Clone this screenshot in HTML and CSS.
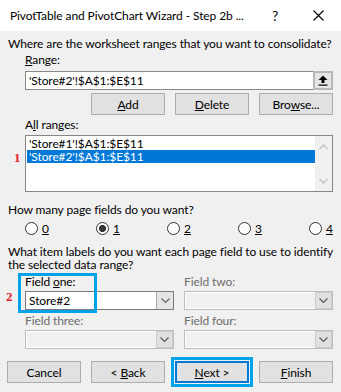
FILE: index.html
```html
<!DOCTYPE html>
<html lang="en">
<head>
  <meta charset="UTF-8" />
  <meta name="viewport" content="width=device-width, initial-scale=1.0"/>
  <title>PivotTable and PivotChart Wizard</title>
  <link rel="stylesheet" href="styles.css">
</head>
<body>
  <div class="dialog">
    <div class="titlebar">
      <span class="title">PivotTable and PivotChart Wizard - Step 2b ...</span>
      <span class="help">?</span>
      <span class="close">
        <svg width="11" height="11" viewBox="0 0 11 11"><path d="M0.5 0.5 L10.5 10.5 M10.5 0.5 L0.5 10.5" stroke="#000" stroke-width="1.1" fill="none"/></svg>
      </span>
    </div>

    <div class="content">
      <p class="text">Where are the worksheet ranges that you want to consolidate?</p>
      <div class="label indent"><u>R</u>ange:</div>
      <div class="range-row indent">
        <div class="textbox">'Store#2'!$A$1:$E$11</div>
        <button class="collapse-btn">
          <svg width="10" height="11" viewBox="0 0 10 11"><path d="M5 0.5 L9.5 5 L6.5 5 L6.5 8 L3.5 8 L3.5 5 L0.5 5 Z" fill="#000"/><rect x="0.5" y="9.5" width="9" height="1.2" fill="#000"/></svg>
        </button>
      </div>

      <div class="btn-row">
        <button class="btn"><u>A</u>dd</button>
        <button class="btn"><u>D</u>elete</button>
        <button class="btn">Bro<u>w</u>se...</button>
      </div>

      <div class="label indent gap-top">A<u>l</u>l ranges:</div>
      <div class="list-wrap indent">
        <span class="marker marker-one">1</span>
        <ul class="list">
          <li>'Store#1'!$A$1:$E$11</li>
          <li class="selected">'Store#2'!$A$1:$E$11</li>
        </ul>
        <div class="scrollbar">
          <svg width="9" height="6" viewBox="0 0 9 6"><path d="M0.5 5 L4.5 1 L8.5 5" stroke="#c2c2c2" stroke-width="1.4" fill="none"/></svg>
          <svg width="9" height="6" viewBox="0 0 9 6"><path d="M0.5 1 L4.5 5 L8.5 1" stroke="#c2c2c2" stroke-width="1.4" fill="none"/></svg>
        </div>
      </div>

      <p class="text question">How many page fields do you want?</p>
      <div class="radios indent">
        <label class="radio"><input type="radio" name="pages"><u>0</u></label>
        <label class="radio"><input type="radio" name="pages" checked><u>1</u></label>
        <label class="radio"><input type="radio" name="pages"><u>2</u></label>
        <label class="radio"><input type="radio" name="pages"><u>3</u></label>
        <label class="radio"><input type="radio" name="pages"><u>4</u></label>
      </div>

      <p class="text wrap">What item labels do you want each page field to use to identify the selected data range?</p>

      <div class="fields indent">
        <div class="field first">
          <span class="marker marker-two">2</span>
          <span class="highlight-box"></span>
          <div class="field-label">Field <u>o</u>ne:</div>
          <div class="combo">
            <div class="combo-text">Store#2</div>
            <div class="combo-btn">
              <svg width="9" height="5" viewBox="0 0 9 5"><path d="M0.5 0.5 L4.5 4.5 L8.5 0.5" stroke="#606060" stroke-width="1.1" fill="none"/></svg>
            </div>
          </div>
        </div>
        <div class="field">
          <div class="field-label disabled">Field two:</div>
          <div class="combo disabled">
            <div class="combo-text"></div>
            <div class="combo-btn">
              <svg width="9" height="5" viewBox="0 0 9 5"><path d="M0.5 0.5 L4.5 4.5 L8.5 0.5" stroke="#555" stroke-width="1.1" fill="none"/></svg>
            </div>
          </div>
        </div>
        <div class="field">
          <div class="field-label disabled">Field three:</div>
          <div class="combo disabled">
            <div class="combo-text"></div>
            <div class="combo-btn">
              <svg width="9" height="5" viewBox="0 0 9 5"><path d="M0.5 0.5 L4.5 4.5 L8.5 0.5" stroke="#555" stroke-width="1.1" fill="none"/></svg>
            </div>
          </div>
        </div>
        <div class="field">
          <div class="field-label disabled">Field four:</div>
          <div class="combo disabled">
            <div class="combo-text"></div>
            <div class="combo-btn">
              <svg width="9" height="5" viewBox="0 0 9 5"><path d="M0.5 0.5 L4.5 4.5 L8.5 0.5" stroke="#555" stroke-width="1.1" fill="none"/></svg>
            </div>
          </div>
        </div>
      </div>

      <div class="footer">
        <button class="btn">Cancel</button>
        <button class="btn">&lt; <u>B</u>ack</button>
        <button class="btn default"><u>N</u>ext &gt;</button>
        <button class="btn"><u>F</u>inish</button>
      </div>
    </div>
  </div>
</body>
</html>
```

FILE: styles.css
```css
* {
  margin: 0;
  padding: 0;
  box-sizing: border-box;
}

body {
  width: 341px;
  height: 392px;
  overflow: hidden;
  background: #f0f0f0;
  color: #000;
  font-family: Lato, 'Noto Sans', sans-serif;
  font-size: 12px;
  letter-spacing: -0.1px;
}

.dialog {
  height: 392px;
  display: flex;
  flex-direction: column;
}

/* Title bar */
.titlebar {
  height: 31px;
  flex-shrink: 0;
  background: #fff;
  display: flex;
  align-items: center;
  padding-left: 10px;
}

.title {
  flex: 1;
  white-space: nowrap;
}

.help {
  width: 40px;
  text-align: center;
  font-size: 14px;
}

.close {
  width: 46px;
  display: flex;
  justify-content: center;
  align-items: center;
}

/* Body */
.content {
  padding: 5px 8px 0;
  display: flex;
  flex-direction: column;
}

.text,
.label {
  line-height: 16px;
  white-space: nowrap;
}

.indent {
  margin-left: 17px;
}

.gap-top {
  margin-top: 2px;
}

.range-row {
  display: flex;
  height: 19px;
  margin-top: 3px;
}

.textbox {
  flex: 1;
  background: #fff;
  border: 1px solid #8a8a8a;
  border-right: none;
  padding-left: 3px;
  line-height: 17px;
}

.collapse-btn {
  width: 20px;
  background: #e6e6e6;
  border: 2px solid #b8b8b8;
  display: flex;
  align-items: center;
  justify-content: center;
}

.btn-row {
  display: flex;
  justify-content: flex-end;
  gap: 10px;
  margin-top: 3px;
}

.btn {
  width: 74px;
  height: 22px;
  background: #e1e1e1;
  border: 1px solid #adadad;
  color: #000;
  font-family: inherit;
  font-size: 12px;
  letter-spacing: inherit;
}

.btn.default {
  border: 2px solid #0078d7;
  outline: 3px solid #00a2e8;
  outline-offset: 1px;
}

/* List box */
.list-wrap {
  position: relative;
  height: 57px;
  margin-top: 2px;
  display: flex;
  background: #fff;
  border: 1px solid #878787;
}

.list {
  flex: 1;
  list-style: none;
  padding: 1px 0 0 1px;
}

.list li {
  height: 13px;
  line-height: 13px;
  padding-left: 2px;
  white-space: nowrap;
}

.list li.selected {
  background: #0078d7;
  color: #fff;
}

.scrollbar {
  width: 17px;
  background: #f0f0f0;
  display: flex;
  flex-direction: column;
  align-items: center;
  justify-content: space-between;
  padding: 8px 0 7px;
}

.marker {
  position: absolute;
  font-family: 'Liberation Serif', serif;
  font-weight: bold;
  color: #e32027;
  font-size: 13px;
  line-height: 12px;
}

.marker-one {
  left: -12px;
  top: 16px;
}

.marker-two {
  left: -19px;
  top: 17px;
}

/* Radios */
.question {
  margin-top: 10px;
}

.radios {
  display: grid;
  grid-template-columns: repeat(4, 71px) auto;
  height: 16px;
  margin-top: 2px;
}

.radio {
  display: flex;
  align-items: center;
}

.radio input {
  appearance: none;
  width: 13px;
  height: 13px;
  margin-right: 4px;
  border: 1px solid #333;
  border-radius: 50%;
  background: #fff;
}

.radio input:checked {
  background: radial-gradient(circle, #333 0, #333 3.3px, #fff 3.8px);
}

.wrap {
  white-space: normal;
  line-height: 13px;
  margin-top: 9px;
}

/* Page field combos */
.fields {
  display: grid;
  grid-template-columns: 149px 149px;
  column-gap: 10px;
  row-gap: 3px;
  margin-top: 3px;
}

.field {
  position: relative;
}

.field-label {
  line-height: 16px;
  margin-bottom: 1px;
}

.field-label.disabled {
  color: #6d6d6d;
}

.combo {
  height: 19px;
  display: flex;
  background: #fff;
  border: 1px solid #7a7a7a;
}

.combo-text {
  flex: 1;
  padding-left: 3px;
  line-height: 17px;
}

.combo-btn {
  width: 17px;
  background: #e5e5e5;
  border-left: 1px solid #adadad;
  display: flex;
  align-items: center;
  justify-content: center;
}

.combo.disabled {
  background: #f0f0f0;
  border-color: #bcbcbc;
}

.combo.disabled .combo-text {
  border: 1px solid #fff;
  border-right: none;
}

.combo.disabled .combo-btn {
  background: #e0e0e0;
  border: 1px solid #cdcdcd;
}

.highlight-box {
  position: absolute;
  left: -7px;
  top: -1px;
  width: 79px;
  height: 40px;
  border: 3px solid #00a2e8;
}

/* Footer */
.footer {
  display: flex;
  justify-content: space-between;
  margin: 12px 0 0 -1px;
}
```
